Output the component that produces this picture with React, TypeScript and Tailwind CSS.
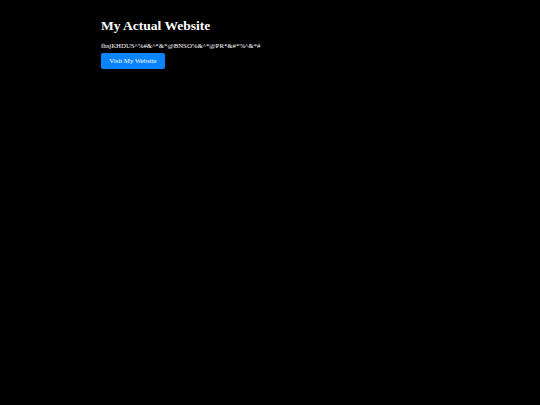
export default function App() {
  return (
    <div className="min-h-screen w-full bg-black text-white" style={{ fontFamily: '"Liberation Serif", serif' }}>
      <div className="flex flex-col items-start pl-[101px] pt-[17px]">
        <h1 className="text-[13.5px] leading-[18px] font-bold">My Actual Website</h1>
        <p className="mt-[6px] text-[6.8px] leading-[9px]">fhsjKHDUS^%#&amp;^*&amp;*@BNSO%&amp;^*@PR*&amp;#*%^&amp;*#</p>
        <button className="mt-[3px] h-[16px] w-[64px] rounded-[2px] bg-[#0a84ff] text-[6.8px] text-white">
          Visit My Website
        </button>
      </div>
    </div>
  );
}
